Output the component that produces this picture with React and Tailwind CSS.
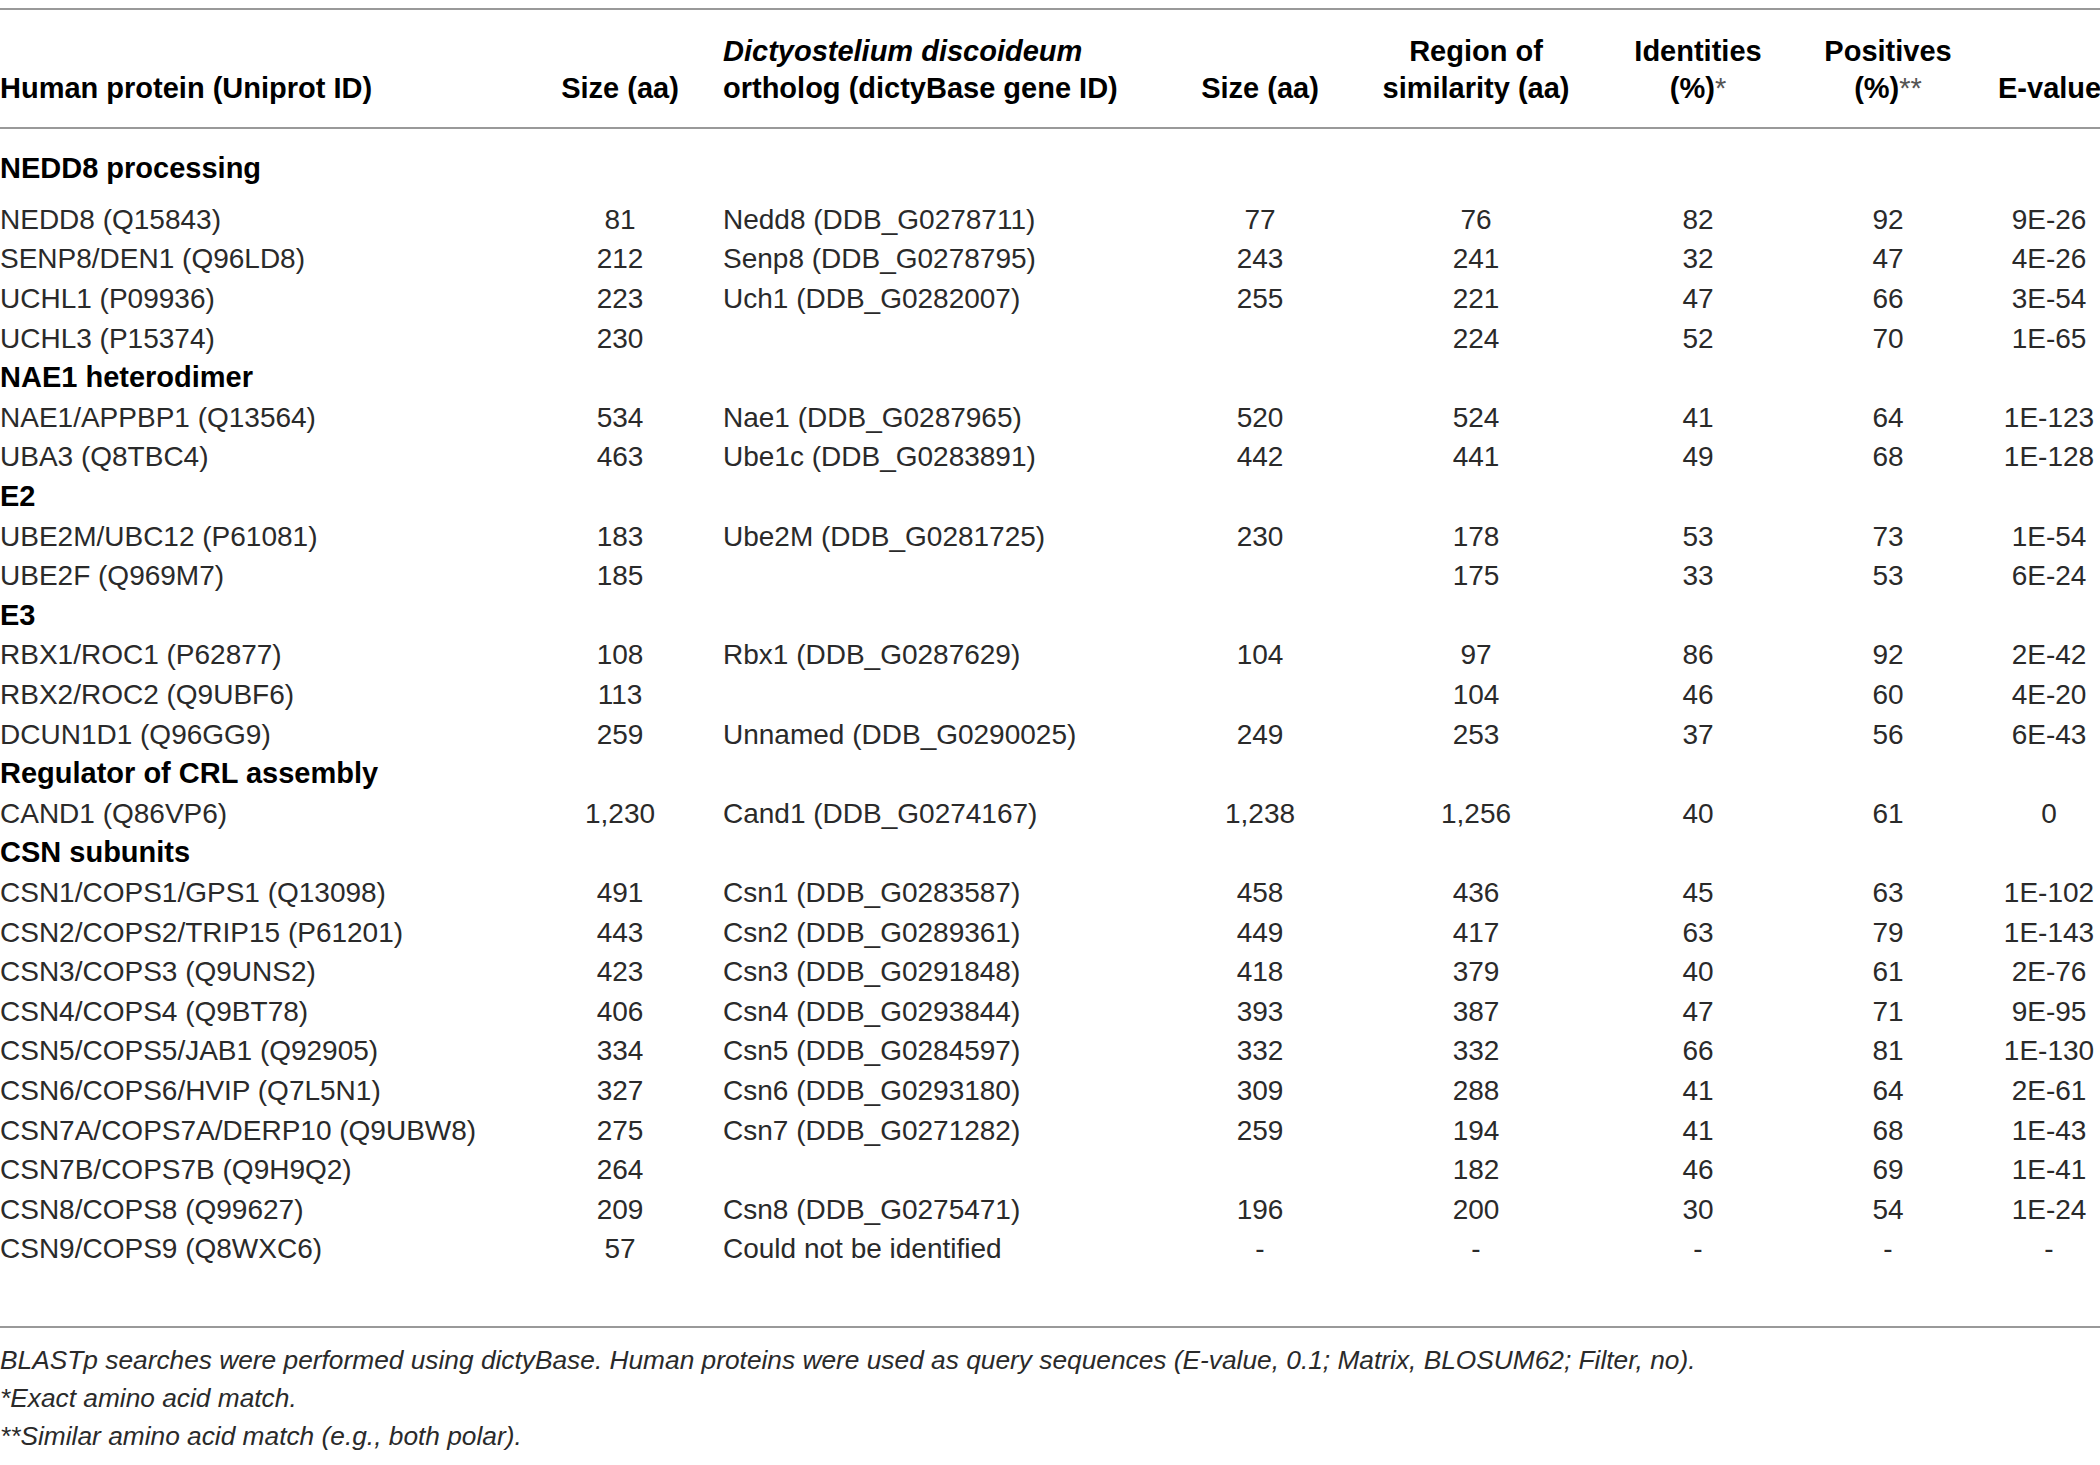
import React from "react";

const rows = [
  { s: "NEDD8 processing", first: true },
  ["NEDD8 (Q15843)", "81", "Nedd8 (DDB_G0278711)", "77", "76", "82", "92", "9E-26"],
  ["SENP8/DEN1 (Q96LD8)", "212", "Senp8 (DDB_G0278795)", "243", "241", "32", "47", "4E-26"],
  ["UCHL1 (P09936)", "223", "Uch1 (DDB_G0282007)", "255", "221", "47", "66", "3E-54"],
  ["UCHL3 (P15374)", "230", "", "", "224", "52", "70", "1E-65"],
  { s: "NAE1 heterodimer" },
  ["NAE1/APPBP1 (Q13564)", "534", "Nae1 (DDB_G0287965)", "520", "524", "41", "64", "1E-123"],
  ["UBA3 (Q8TBC4)", "463", "Ube1c (DDB_G0283891)", "442", "441", "49", "68", "1E-128"],
  { s: "E2" },
  ["UBE2M/UBC12 (P61081)", "183", "Ube2M (DDB_G0281725)", "230", "178", "53", "73", "1E-54"],
  ["UBE2F (Q969M7)", "185", "", "", "175", "33", "53", "6E-24"],
  { s: "E3" },
  ["RBX1/ROC1 (P62877)", "108", "Rbx1 (DDB_G0287629)", "104", "97", "86", "92", "2E-42"],
  ["RBX2/ROC2 (Q9UBF6)", "113", "", "", "104", "46", "60", "4E-20"],
  ["DCUN1D1 (Q96GG9)", "259", "Unnamed (DDB_G0290025)", "249", "253", "37", "56", "6E-43"],
  { s: "Regulator of CRL assembly" },
  ["CAND1 (Q86VP6)", "1,230", "Cand1 (DDB_G0274167)", "1,238", "1,256", "40", "61", "0"],
  { s: "CSN subunits" },
  ["CSN1/COPS1/GPS1 (Q13098)", "491", "Csn1 (DDB_G0283587)", "458", "436", "45", "63", "1E-102"],
  ["CSN2/COPS2/TRIP15 (P61201)", "443", "Csn2 (DDB_G0289361)", "449", "417", "63", "79", "1E-143"],
  ["CSN3/COPS3 (Q9UNS2)", "423", "Csn3 (DDB_G0291848)", "418", "379", "40", "61", "2E-76"],
  ["CSN4/COPS4 (Q9BT78)", "406", "Csn4 (DDB_G0293844)", "393", "387", "47", "71", "9E-95"],
  ["CSN5/COPS5/JAB1 (Q92905)", "334", "Csn5 (DDB_G0284597)", "332", "332", "66", "81", "1E-130"],
  ["CSN6/COPS6/HVIP (Q7L5N1)", "327", "Csn6 (DDB_G0293180)", "309", "288", "41", "64", "2E-61"],
  ["CSN7A/COPS7A/DERP10 (Q9UBW8)", "275", "Csn7 (DDB_G0271282)", "259", "194", "41", "68", "1E-43"],
  ["CSN7B/COPS7B (Q9H9Q2)", "264", "", "", "182", "46", "69", "1E-41"],
  ["CSN8/COPS8 (Q99627)", "209", "Csn8 (DDB_G0275471)", "196", "200", "30", "54", "1E-24"],
  ["CSN9/COPS9 (Q8WXC6)", "57", "Could not be identified", "-", "-", "-", "-", "-"],
];

const grid =
  "grid grid-cols-[540px_160px_500px_120px_312px_132px_234px_102px]";

function DataRow({ r }) {
  return (
    <div className={`${grid} h-[39.6px] items-center leading-[39.6px] whitespace-nowrap`}>
      <div>{r[0]}</div>
      <div className="text-center">{r[1]}</div>
      <div className="pl-[23px]">{r[2]}</div>
      <div className="text-center">{r[3]}</div>
      <div className="text-center">{r[4]}</div>
      <div className="text-center">{r[5]}</div>
      <div className="text-center pl-[14px]">{r[6]}</div>
      <div className="text-center">{r[7]}</div>
    </div>
  );
}

export default function App() {
  return (
    <div className="w-[2100px] h-[1465px] overflow-hidden bg-white font-['Liberation_Sans',Arial,sans-serif] text-[#2a2a2a]">
      <div className="h-[8px]" />
      <div className="border-t-2 border-b-2 border-[#999]">
        <div
          className={`${grid} items-end pt-[23px] pb-[20px] leading-[37px] text-[29px] font-bold text-black whitespace-nowrap`}
        >
          <div>Human protein (Uniprot ID)</div>
          <div className="text-center">Size (aa)</div>
          <div className="pl-[23px]">
            <div className="italic">Dictyostelium discoideum</div>
            <div>ortholog (dictyBase gene ID)</div>
          </div>
          <div className="text-center">Size (aa)</div>
          <div className="text-center">
            <div>Region of</div>
            <div>similarity (aa)</div>
          </div>
          <div className="text-center">
            <div>Identities</div>
            <div>
              (%)<span className="font-normal text-[#555]">*</span>
            </div>
          </div>
          <div className="text-center pl-[14px]">
            <div>Positives</div>
            <div>
              (%)<span className="font-normal text-[#555]">**</span>
            </div>
          </div>
          <div className="text-center">E-value</div>
        </div>
      </div>
      <div className="border-b-2 border-[#999] pt-[20px] pb-[57px] text-[28px]">
        {rows.map((r, i) =>
          r.s ? (
            <div
              key={i}
              className={`h-[39.6px] leading-[39.6px] text-[29px] font-bold text-black whitespace-nowrap ${r.first ? "mb-[11.3px]" : ""}`}
            >
              {r.s}
            </div>
          ) : (
            <DataRow key={i} r={r} />
          )
        )}
      </div>
      <div className="pt-[13px] leading-[38px] text-[26.3px] italic text-[#2a2a2a] whitespace-nowrap">
        <div>
          BLASTp searches were performed using dictyBase. Human proteins were used as query sequences (E-value, 0.1; Matrix, BLOSUM62; Filter, no).
        </div>
        <div>*Exact amino acid match.</div>
        <div>**Similar amino acid match (e.g., both polar).</div>
      </div>
    </div>
  );
}
